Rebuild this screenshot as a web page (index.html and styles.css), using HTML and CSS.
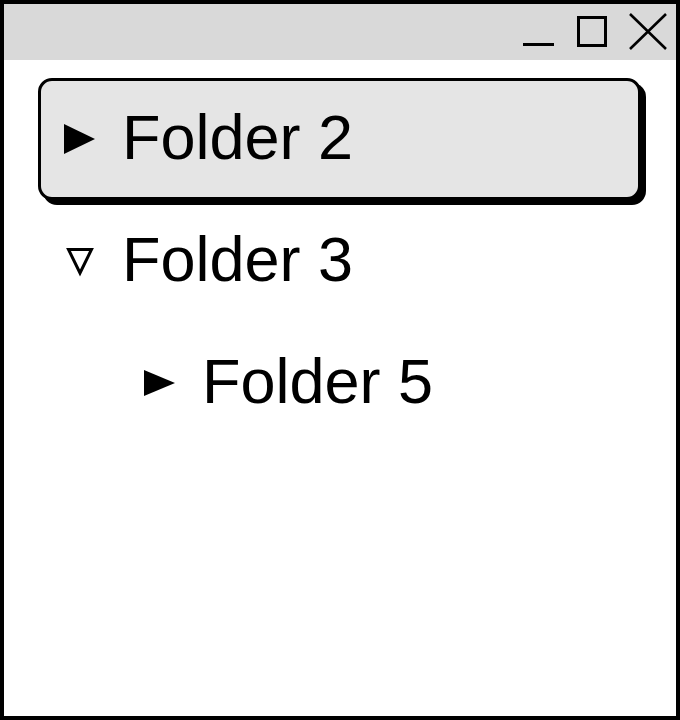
FILE: index.html
```html
<!DOCTYPE html>
<html>
<head>
<meta charset="utf-8">
<link rel="stylesheet" href="styles.css">
</head>
<body>
<div class="window">
  <div class="titlebar">
    <svg class="controls" width="152" height="56" viewBox="0 0 152 56">
      <rect x="3" y="39" width="31" height="3" fill="#000"/>
      <rect x="58.5" y="13.5" width="27" height="28" fill="none" stroke="#000" stroke-width="3"/>
      <path d="M110 10 L146 45 M146 10 L110 45" stroke="#000" stroke-width="2.6" fill="none"/>
    </svg>
  </div>
  <div class="tree">
    <div class="row selected">
      <span class="twisty">
        <svg width="32" height="32" viewBox="0 0 32 32"><path d="M0 1 L31 16 L0 31 Z" fill="#000"/></svg>
      </span>
      <span class="label">Folder 2</span>
    </div>
    <div class="row">
      <span class="twisty">
        <svg width="32" height="32" viewBox="0 0 32 32"><path d="M4.5 4.5 L27.5 4.5 L16 28 Z" fill="none" stroke="#000" stroke-width="3" stroke-linejoin="miter"/></svg>
      </span>
      <span class="label">Folder 3</span>
    </div>
    <div class="row indent">
      <span class="twisty">
        <svg width="32" height="32" viewBox="0 0 32 32"><path d="M0 3 L31 16 L0 29 Z" fill="#000"/></svg>
      </span>
      <span class="label">Folder 5</span>
    </div>
  </div>
</div>
</body>
</html>
```
FILE: styles.css
```css
html, body {
  margin: 0;
  padding: 0;
  background: #fff;
}

.window {
  width: 680px;
  height: 720px;
  box-sizing: border-box;
  border: 4px solid #000;
  background: #fff;
  font-family: "Liberation Sans", Arial, sans-serif;
  color: #000;
}

.titlebar {
  height: 56px;
  background: #d9d9d9;
  display: flex;
  justify-content: flex-end;
  padding-right: 4px;
}

.controls {
  display: block;
}

.tree {
  padding: 18px 35px 0 34px;
  display: flex;
  flex-direction: column;
}

.row {
  height: 116px;
  display: flex;
  align-items: center;
  border: 3px solid transparent;
  border-radius: 14px;
  padding-left: 23px;
}

.row.selected {
  background: #e5e5e5;
  border-color: #000;
  box-shadow: 5px 5px 0 #000;
}

.row.indent {
  padding-left: 103px;
}

.twisty {
  width: 32px;
  height: 32px;
  display: flex;
  margin-right: 26px;
}

.label {
  font-size: 63px;
  line-height: 1;
  padding-bottom: 3px;
}
```
